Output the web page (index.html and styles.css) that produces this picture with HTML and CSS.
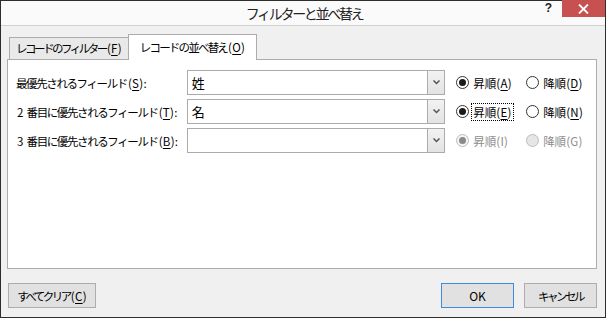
FILE: index.html
```html
<!DOCTYPE html>
<html lang="ja">
<head>
<meta charset="utf-8">
<link rel="stylesheet" href="styles.css">
</head>
<body>
<div class="window">
  <div class="titlebar">
    <div></div>
    <div class="title">フィルターと並べ替え</div>
    <div class="controls">
      <span class="help">?</span>
      <span class="close"><svg width="11" height="10" viewBox="0 0 11 10"><path d="M1 0.5 L10 9.5 M10 0.5 L1 9.5" stroke="#fff" stroke-width="1.8"/></svg></span>
    </div>
  </div>
  <div class="body">
    <div class="tabs">
      <div class="tab"><span class="jp narrow">レコードのフィルター</span><span class="en">(<u>F</u>)</span></div>
      <div class="tab active"><span class="jp mid">レコードの並べ替え</span><span class="en">(<u>O</u>)</span></div>
    </div>
    <div class="panel">
      <div class="row">
        <div class="label"><span class="jp">最優先されるフィールド</span><span class="en">(<u>S</u>):</span></div>
        <div class="combo"><span class="value">姓</span><span class="drop"><svg width="7" height="5" viewBox="0 0 7 5"><path d="M0.5 0.5 L3.5 3.5 L6.5 0.5" fill="none" stroke="#555" stroke-width="1.5"/></svg></span></div>
        <label class="radio"><span class="dot checked"></span><span class="rtext">昇順<span class="en">(<u>A</u>)</span></span></label>
        <label class="radio"><span class="dot"></span><span class="rtext">降順<span class="en">(<u>D</u>)</span></span></label>
      </div>
      <div class="row">
        <div class="label"><span class="en">2&nbsp;</span><span class="jp">番目に優先されるフィールド</span><span class="en">(<u>T</u>):</span></div>
        <div class="combo"><span class="value">名</span><span class="drop"><svg width="7" height="5" viewBox="0 0 7 5"><path d="M0.5 0.5 L3.5 3.5 L6.5 0.5" fill="none" stroke="#555" stroke-width="1.5"/></svg></span></div>
        <label class="radio"><span class="dot checked"></span><span class="rtext focus">昇順<span class="en">(<u>E</u>)</span></span></label>
        <label class="radio"><span class="dot"></span><span class="rtext">降順<span class="en">(<u>N</u>)</span></span></label>
      </div>
      <div class="row">
        <div class="label"><span class="en">3&nbsp;</span><span class="jp">番目に優先されるフィールド</span><span class="en">(<u>B</u>):</span></div>
        <div class="combo"><span class="value"></span><span class="drop"><svg width="7" height="5" viewBox="0 0 7 5"><path d="M0.5 0.5 L3.5 3.5 L6.5 0.5" fill="none" stroke="#555" stroke-width="1.5"/></svg></span></div>
        <label class="radio disabled"><span class="dot checked"></span><span class="rtext">昇順<span class="en">(I)</span></span></label>
        <label class="radio disabled"><span class="dot"></span><span class="rtext">降順<span class="en">(G)</span></span></label>
      </div>
    </div>
    <div class="buttons">
      <button class="btn clear"><span class="jp narrow">すべてクリア</span><span class="en">(<u>C</u>)</span></button>
      <div class="spacer"></div>
      <button class="btn default">OK</button>
      <button class="btn"><span class="jp narrow">キャンセル</span></button>
    </div>
  </div>
</div>
</body>
</html>
```
FILE: styles.css
```css
html, body {
  margin: 0;
  padding: 0;
  background: #f0f0f0;
}
body {
  font-family: "Noto Sans CJK JP", "Noto Sans", sans-serif;
  font-size: 11.5px;
  color: #000;
}
u { text-decoration: underline; text-underline-offset: 2px; }
.jp { letter-spacing: -1.4px; }
.jp.mid { letter-spacing: -1.8px; }
.jp.narrow { letter-spacing: -2.5px; }
.en { letter-spacing: 0.3px; padding-left: 1px; }
.window {
  width: 606px;
  height: 318px;
  box-sizing: border-box;
  border: 1px solid #2d2d2d;
  background: #f0f0f0;
  display: flex;
  flex-direction: column;
}
.titlebar {
  height: 25px;
  background: #fafafa;
  border-bottom: 1px solid #d0d0d0;
  display: grid;
  grid-template-columns: 1fr auto 1fr;
  align-items: start;
}
.title {
  font-size: 14px;
  letter-spacing: -2.3px;
  line-height: 24px;
  color: #222;
  padding-left: 2px;
}
.controls {
  display: flex;
  justify-content: flex-end;
  align-items: flex-start;
  margin-top: -1px;
}
.help {
  font-family: "Liberation Sans", sans-serif;
  font-weight: bold;
  font-size: 12px;
  line-height: 14px;
  color: #222;
  margin-right: 10px;
  margin-top: 1px;
}
.close {
  width: 43px;
  height: 17px;
  background: #c75050;
  display: flex;
  align-items: center;
  justify-content: center;
}
.body {
  flex: 1;
  display: flex;
  flex-direction: column;
  padding: 8px 8px 9px 6px;
}
.tabs {
  display: flex;
  align-items: flex-end;
  padding-left: 2px;
  height: 26px;
  margin-bottom: -1px;
  position: relative;
  z-index: 1;
}
.tab {
  width: 120px;
  height: 22px;
  box-sizing: border-box;
  border: 1px solid #acacac;
  border-bottom: none;
  background: #e9e9e9;
  line-height: 21px;
  margin-bottom: 1px;
  white-space: nowrap;
  display: flex;
  justify-content: center;
}
.tab.active {
  width: 129px;
  height: 26px;
  background: #fff;
  margin-left: -1px;
  margin-bottom: 0;
  padding-top: 2px;
}
.panel {
  height: 210px;
  box-sizing: border-box;
  background: #fff;
  border: 1px solid #acacac;
  padding: 10px 0 0 8px;
  display: flex;
  flex-direction: column;
  gap: 4px;
}
.row {
  display: flex;
  align-items: center;
  height: 25px;
}
.label {
  width: 171px;
  white-space: nowrap;
}
.combo {
  width: 259px;
  height: 25px;
  box-sizing: border-box;
  border: 1px solid #ababab;
  display: flex;
  background: #fff;
}
.value {
  flex: 1;
  padding-left: 4px;
  line-height: 23px;
  font-size: 13px;
}
.drop {
  width: 16px;
  border-left: 1px solid #ababab;
  background: linear-gradient(#f2f2f2, #e3e3e3);
  display: flex;
  align-items: center;
  justify-content: center;
}
.radio {
  display: flex;
  align-items: center;
  margin-left: 11px;
  width: 70px;
}
.radio + .radio { margin-left: 0; }
.dot {
  width: 13px;
  height: 13px;
  box-sizing: border-box;
  border: 1px solid #333;
  border-radius: 50%;
  background: #fff;
  display: flex;
  align-items: center;
  justify-content: center;
  margin-right: 2px;
  flex: none;
}
.dot.checked::after {
  content: "";
  width: 7px;
  height: 7px;
  border-radius: 50%;
  background: #1a1a1a;
}
.rtext {
  padding: 0 1px;
  line-height: 16px;
  border: 1px dotted transparent;
  white-space: nowrap;
}
.rtext .en { padding-left: 0; }
.rtext.focus { border-color: #000; }
.radio.disabled .dot { border-color: #bcbcbc; background: #f4f4f4; }
.radio.disabled .dot.checked::after { background: #8a8a8a; }
.radio.disabled .dot:not(.checked) { background: #e6e6e6; }
.radio.disabled .rtext { color: #8d8d8d; }
.buttons {
  display: flex;
  align-items: center;
  margin-top: 14px;
  gap: 10px;
  padding-left: 1px;
}
.spacer { flex: 1; }
.btn {
  font-family: inherit;
  font-size: 11.5px;
  height: 25px;
  width: 73px;
  box-sizing: border-box;
  background: #e1e1e1;
  border: 1px solid #adadad;
  padding: 0;
  color: #000;
  white-space: nowrap;
}
.btn.clear { width: 88px; }
.btn.default { border-color: #3c8de0; font-size: 12px; }
```
